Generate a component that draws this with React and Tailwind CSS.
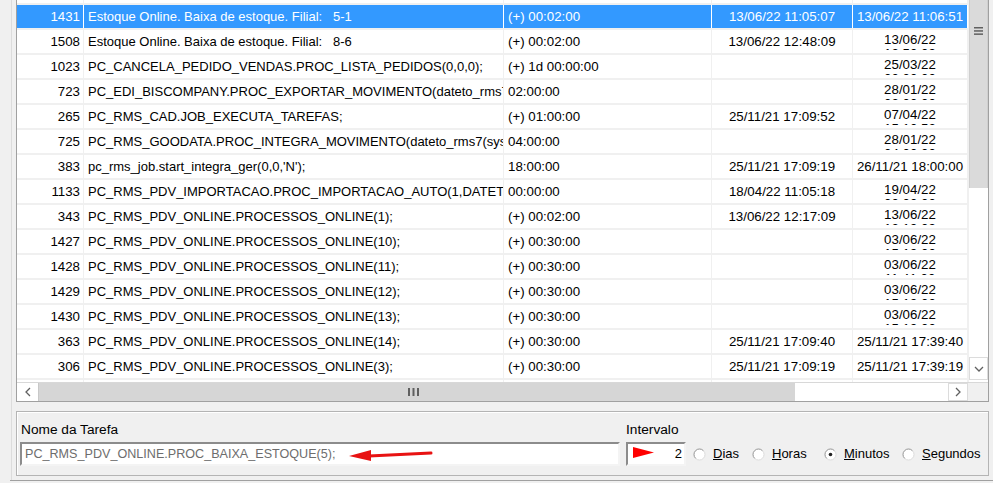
import React from 'react';

// Grid data, scrolled: first row is partially hidden under the top edge
const ROWS = [
  { id: '1426', name: 'PC_RMS_PDV_ONLINE.PROCESSOS_ONLINE(9);', interval: '(+) 00:30:00', last: '', next: ['13/06/22', '11:34:15'] },
  { id: '1431', name: 'Estoque Online. Baixa de estoque. Filial:   5-1', interval: '(+) 00:02:00', last: '13/06/22 11:05:07', next: '13/06/22 11:06:51', selected: true },
  { id: '1508', name: 'Estoque Online. Baixa de estoque. Filial:   8-6', interval: '(+) 00:02:00', last: '13/06/22 12:48:09', next: ['13/06/22', '12:50:09'] },
  { id: '1023', name: 'PC_CANCELA_PEDIDO_VENDAS.PROC_LISTA_PEDIDOS(0,0,0);', interval: '(+) 1d 00:00:00', last: '', next: ['25/03/22', '00:00:00'] },
  { id: '723', name: 'PC_EDI_BISCOMPANY.PROC_EXPORTAR_MOVIMENTO(dateto_rms7(sysdate)-1);', interval: '02:00:00', last: '', next: ['28/01/22', '02:00:00'] },
  { id: '265', name: 'PC_RMS_CAD.JOB_EXECUTA_TAREFAS;', interval: '(+) 01:00:00', last: '25/11/21 17:09:52', next: ['07/04/22', '15:10:52'] },
  { id: '725', name: 'PC_RMS_GOODATA.PROC_INTEGRA_MOVIMENTO(dateto_rms7(sysdate));', interval: '04:00:00', last: '', next: ['28/01/22', '04:00:00'] },
  { id: '383', name: "pc_rms_job.start_integra_ger(0,0,'N');", interval: '18:00:00', last: '25/11/21 17:09:19', next: '26/11/21 18:00:00' },
  { id: '1133', name: 'PC_RMS_PDV_IMPORTACAO.PROC_IMPORTACAO_AUTO(1,DATETO_RMS7(SYSDATE));', interval: '00:00:00', last: '18/04/22 11:05:18', next: ['19/04/22', '00:00:00'] },
  { id: '343', name: 'PC_RMS_PDV_ONLINE.PROCESSOS_ONLINE(1);', interval: '(+) 00:02:00', last: '13/06/22 12:17:09', next: ['13/06/22', '12:19:09'] },
  { id: '1427', name: 'PC_RMS_PDV_ONLINE.PROCESSOS_ONLINE(10);', interval: '(+) 00:30:00', last: '', next: ['03/06/22', '15:19:00'] },
  { id: '1428', name: 'PC_RMS_PDV_ONLINE.PROCESSOS_ONLINE(11);', interval: '(+) 00:30:00', last: '', next: ['03/06/22', '11:41:00'] },
  { id: '1429', name: 'PC_RMS_PDV_ONLINE.PROCESSOS_ONLINE(12);', interval: '(+) 00:30:00', last: '', next: ['03/06/22', '15:19:00'] },
  { id: '1430', name: 'PC_RMS_PDV_ONLINE.PROCESSOS_ONLINE(13);', interval: '(+) 00:30:00', last: '', next: ['03/06/22', '15:19:00'] },
  { id: '363', name: 'PC_RMS_PDV_ONLINE.PROCESSOS_ONLINE(14);', interval: '(+) 00:30:00', last: '25/11/21 17:09:40', next: '25/11/21 17:39:40' },
  { id: '306', name: 'PC_RMS_PDV_ONLINE.PROCESSOS_ONLINE(3);', interval: '(+) 00:30:00', last: '25/11/21 17:09:19', next: '25/11/21 17:39:19' },
  { id: '307', name: 'PC_RMS_PDV_ONLINE.PROCESSOS_ONLINE(4);', interval: '(+) 00:30:00', last: '', next: '' },
];

const Row = ({ row }) => {
  const sel = row.selected;
  const cell = `h-[23px] overflow-hidden whitespace-nowrap border-r ${sel ? 'border-white' : 'border-[#f0f0f0]'}`;
  return (
    <div className={`flex border-b-2 border-[#f0f0f0] ${sel ? 'bg-[#3399ff] text-white' : 'bg-white'}`}>
      <div className={`${cell} w-[67px] pr-[3px] text-right leading-[23px]`}>{row.id}</div>
      <div className={`${cell} w-[420px] pl-[4px] leading-[23px] whitespace-pre text-[13px]`}>{row.name}</div>
      <div className={`${cell} w-[208px] pl-[4px] leading-[23px]`}>{row.interval}</div>
      <div className={`${cell} w-[141px] text-center leading-[23px]`}>{row.last}</div>
      {Array.isArray(row.next) ? (
        <div className={`${cell} w-[115px]`}>
          <div className="h-[20px] overflow-hidden pt-[3px] text-center leading-[14px]">
            <div>{row.next[0]}</div>
            <div>{row.next[1]}</div>
          </div>
        </div>
      ) : (
        <div className={`${cell} w-[115px] text-center leading-[23px]`}>{row.next}</div>
      )}
    </div>
  );
};

const Chevron = ({ dir }) => {
  const pts = {
    left: '6,1 2,5 6,9',
    right: '2,1 6,5 2,9',
    down: '1,2 5,6 9,2',
  }[dir];
  const w = dir === 'down' ? 10 : 8;
  const h = dir === 'down' ? 8 : 10;
  return (
    <svg width={w} height={h} viewBox={`0 0 ${w} ${h}`}>
      <polyline points={pts} fill="none" stroke="#606060" strokeWidth="1.3" />
    </svg>
  );
};

const VScroll = () => (
  <div className="w-[20px] flex flex-col bg-white border-l border-[#f0f0f0]">
    {/* thumb */}
    <div className="h-[188px] bg-[#dadada] border-x border-[#cfcfcf] flex justify-center pt-[27px]">
      <svg width="9" height="8" viewBox="0 0 9 8">
        <rect x="0" y="0" width="9" height="1.5" fill="#606060" />
        <rect x="0" y="3.2" width="9" height="1.5" fill="#606060" />
        <rect x="0" y="6.4" width="9" height="1.5" fill="#606060" />
      </svg>
    </div>
    <div className="flex-1" />
    <div className="h-[23px] mb-[2px] border border-[#dcdcdc] flex items-center justify-center">
      <Chevron dir="down" />
    </div>
  </div>
);

const HScroll = () => (
  <div className="h-[19px] flex bg-white border-t border-[#d8d8d8]">
    <div className="w-[22px] border-r border-[#c8c8c8] flex items-center justify-center">
      <Chevron dir="left" />
    </div>
    <div className="w-[756px] bg-[#d6d6d6] flex items-center justify-center">
      <svg width="11" height="8" viewBox="0 0 11 8" className="ml-[-8px]">
        <rect x="0" y="0" width="2" height="8" fill="#606060" />
        <rect x="4.5" y="0" width="2" height="8" fill="#606060" />
        <rect x="9" y="0" width="2" height="8" fill="#606060" />
      </svg>
    </div>
    <div className="flex-1" />
    <div className="w-[20px] border border-[#dcdcdc] flex items-center justify-center">
      <Chevron dir="right" />
    </div>
    <div className="w-[20px] bg-[#f0f0f0]" />
  </div>
);

const Radio = ({ checked, label, width }) => (
  <div className={`flex items-center ${width}`}>
    <svg width="13" height="13" viewBox="0 0 13 13">
      <circle cx="6.5" cy="6.5" r="5.5" fill="#fff" stroke="#dcdcdc" />
      <path d="M2.61 10.39 A5.5 5.5 0 0 1 10.39 2.61" fill="none" stroke="#a0a0a0" />
      {checked && <circle cx="6.5" cy="6.5" r="1.8" fill="#222" />}
    </svg>
    <span className="ml-[7px]">
      <span className="underline">{label[0]}</span>
      {label.slice(1)}
    </span>
  </div>
);

const sunken = 'border-2 border-t-[#8c8c8c] border-l-[#8c8c8c] border-b-[#f4f4f4] border-r-[#f4f4f4] bg-white';

export default function App() {
  return (
    <div className="w-[993px] h-[483px] bg-[#f0f0f0] overflow-hidden flex flex-col font-['Liberation_Sans',Arial,sans-serif] text-[13.3px] text-black">
      <div className="flex h-[480px]">
        <div className="w-[12px] border-r border-[#dcdcdc]" />
        <div className="w-[4px]" />
        <div className="w-[973px] flex flex-col">
          {/* Task grid */}
          <div className="border-x border-b border-[#a0a0a0]">
            <div className="flex h-[382px]">
              <div className="w-[951px] overflow-hidden bg-white">
                <div className="-mt-[20px]">
                  {ROWS.map((r) => (
                    <Row key={r.id} row={r} />
                  ))}
                </div>
              </div>
              <VScroll />
            </div>
            <HScroll />
          </div>

          {/* Edit group */}
          <div className="mt-[9px] h-[65px] border border-[#b4b4b4] shadow-[inset_1px_1px_0_#fff] flex pl-[3px]">
            <div className="flex flex-col">
              <div className="mt-[10px] pl-[1px] leading-[15px] text-[13.7px]">Nome da Tarefa</div>
              <div className={`relative mt-[5px] h-[24px] w-[600px] ${sunken} pl-[3px] leading-[20px] text-[12.6px] text-[#6d6d6d]`}>
                PC_RMS_PDV_ONLINE.PROC_BAIXA_ESTOQUE(5);
                <svg className="absolute left-[327px] top-[4px]" width="84" height="14" viewBox="0 0 84 14">
                  <polygon points="0,8 22,2 22,13" fill="#e81212" />
                  <line x1="20" y1="8" x2="82" y2="5" stroke="#e81212" strokeWidth="3" strokeLinecap="round" />
                </svg>
              </div>
            </div>
            <div className="flex flex-col ml-[6px]">
              <div className="mt-[10px] leading-[15px] text-[13.7px]">Intervalo</div>
              <div className="mt-[5px] flex items-center h-[24px] text-[13px]">
                <div className={`relative h-[24px] w-[60px] ${sunken} pr-[2px] text-right leading-[20px]`}>
                  2
                  <svg className="absolute left-[5px] top-[3px]" width="21" height="11" viewBox="0 0 21 11">
                    <polygon points="0,0 21,5.5 0,11" fill="#ff0000" />
                  </svg>
                </div>
                <div className="flex ml-[7px]">
                  <Radio label="Dias" width="w-[59px]" />
                  <Radio label="Horas" width="w-[72px]" />
                  <Radio label="Minutos" width="w-[78px]" checked />
                  <Radio label="Segundos" width="w-[86px]" />
                </div>
              </div>
            </div>
          </div>
        </div>
      </div>
      <div className="ml-[10px] flex-1 border-t border-[#a0a0a0]" />
    </div>
  );
}
